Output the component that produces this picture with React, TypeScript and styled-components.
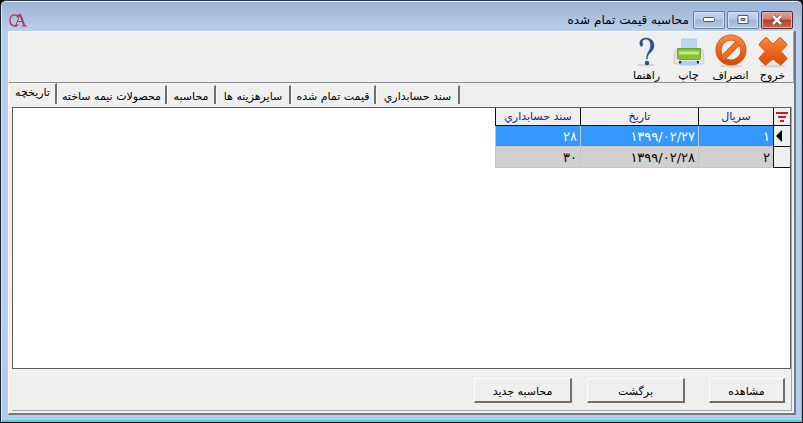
import React from "react";
import styled, { createGlobalStyle, css } from "styled-components";

const GlobalStyle = createGlobalStyle`
  * { box-sizing: border-box; }
  body { margin: 0; background: #000; font-family: "DejaVu Sans", sans-serif; font-size: 11px; color: #000; }
  button { font: inherit; color: inherit; }
`;

const WindowFrame = styled.main`
  display: flex;
  flex-direction: column;
  min-height: 100vh;
  padding: 0 6px 6px 6px;
  border: 1px solid #1a2430;
  border-top-color: #2b3a4d;
  border-bottom-color: #000;
  border-radius: 6px 6px 0 0;
  background: linear-gradient(#98b2d2, #b9d0ec 30px, #b9d0ec 120px, #b4cdea);
  box-shadow: inset 0 1px #eef4fb, inset 1px 0 #dbe9f8, inset -1px -2px #43d4ee;
`;

const TitleBar = styled.header`
  display: flex;
  align-items: center;
  height: 30px;
  padding: 0 0 0 2px;
`;

const Title = styled.h1`
  flex: 1;
  margin: 0;
  padding: 8px 4px 0 0;
  font-size: 12px;
  line-height: 16px;
  font-weight: 400;
  text-align: right;
`;

const Logo = styled.svg`
  width: 20px;
  height: 18px;
  margin-top: 8px;
`;

const CaptionGroup = styled.div`
  display: flex;
  gap: 2px;
  padding: 8px 3px 0 0;
`;

const CaptionButton = styled.button<{ $close?: boolean }>`
  display: grid;
  place-items: center;
  width: 32px;
  height: 18px;
  padding: 0;
  border: 1px solid ${(p) => (p.$close ? "#5b2a35" : "#64809f")};
  border-radius: 2px;
  background: ${(p) =>
    p.$close
      ? "linear-gradient(#e0a59c, #d0796c 45%, #b83a2b 50%, #cf6a50)"
      : "linear-gradient(#c3d6ed, #b3c9e4 45%, #9cb6d5 50%, #b2cae5)"};
  box-shadow: inset 0 0 0 1px ${(p) => (p.$close ? "#e5b0a8" : "#d3e1f2")};
`;

const Client = styled.div`
  display: flex;
  flex: 1;
  flex-direction: column;
  margin: 0 0 1px 1px;
  background: #efefef;
  border-left: 1px solid #fbfbfb;
  border-right: 2px solid #747b87;
  border-bottom: 2px solid #747b87;
`;

const Toolbar = styled.div`
  display: flex;
  gap: 1px;
  height: 52px;
  padding: 2px 0 0;
  border-top: 1px solid #fbfbfb;
  border-right: 1px solid #a0a0a0;
  border-bottom: 1px solid #8c8c8c;
`;

const ToolButton = styled.button`
  display: flex;
  flex-direction: column;
  align-items: center;
  width: 41px;
  padding: 0;
  border: 0;
  background: none;
  line-height: 16px;
  white-space: nowrap;

  svg { display: block; width: 32px; height: 34px; flex: none; }
`;

const TabList = styled.div`
  display: flex;
  align-items: flex-end;
  height: 24px;
  padding: 0 0 3px;
`;

const Tab = styled.button<{ $active?: boolean; $width: number }>`
  width: ${(p) => p.$width}px;
  height: 19px;
  padding: 3px 4px 0;
  border: solid;
  border-width: 1px 2px 0 1px;
  border-color: #fafafa #6f6f6f #fafafa #fafafa;
  background: #efefef;
  line-height: 14px;
  white-space: nowrap;
  ${(p) =>
    p.$active &&
    css`
      height: 21px;
      padding: 0 4px 2px;
    `}
`;

const Page = styled.section`
  display: flex;
  flex: 1;
  flex-direction: column;
  margin: 0 2px 2px 3px;
  border: solid;
  border-width: 0 1px 1px 0;
  border-color: #a5a5a8;
`;

const GridArea = styled.div`
  flex: 1;
  border: 1px solid #5f5a5a;
  background: #fff;
`;

const Table = styled.table`
  width: 295px;
  border-collapse: separate;
  border-spacing: 0;
  table-layout: fixed;
`;

const HeadCell = styled.th<{ $width: number }>`
  width: ${(p) => p.$width}px;
  height: 18px;
  padding: 0;
  border-left: 1px solid #111;
  border-bottom: 1px solid #111;
  background: #efefef;
  color: #1a1a94;
  font-weight: 400;
  line-height: 16px;
  white-space: nowrap;
  svg { display: block; margin: auto; }
`;

const Row = styled.tr<{ $selected?: boolean }>`
  background: ${(p) => (p.$selected ? "#3399ff" : "#d0d0d0")};
  color: ${(p) => (p.$selected ? "#fff" : "#000")};
`;

const Cell = styled.td`
  height: 21px;
  padding: 1px 3px 0 0;
  border-left: 1px solid #c6c6c6;
  border-bottom: 1px solid #c6c6c6;
  font-size: 13px;
  line-height: 18px;
  text-align: right;
`;

const Indicator = styled.td`
  height: 21px;
  padding: 0 0 0 2px;
  border-left: 1px solid #111;
  border-bottom: 1px solid #111;
  background: #efefef;
  svg { display: block; margin-right: auto; }
`;

const Actions = styled.footer`
  display: flex;
  gap: 15px;
  padding: 9px 6px 7px;
`;

const ActionButton = styled.button<{ $narrow?: boolean }>`
  width: ${(p) => (p.$narrow ? 76 : 98)}px;
  height: 25px;
  margin-left: ${(p) => (p.$narrow ? 9 : 0)}px;
  padding: 2px 0 0;
  border: solid;
  border-width: 1px 2px 2px 1px;
  border-color: #fff #746c6c #746c6c #fff;
  background: #efefef;
`;

const CrossIcon = () => (
  <svg viewBox="0 0 32 34" aria-hidden="true">
    <defs>
      <linearGradient id="orange" x1="0" y1="0" x2="0" y2="1">
        <stop offset="0" stopColor="#f48a3c" />
        <stop offset=".5" stopColor="#e9661c" />
        <stop offset="1" stopColor="#dc4d08" />
      </linearGradient>
    </defs>
    <ellipse cx="16" cy="32" rx="13" ry="1.5" fill="#d4d4d4" />
    <path d="M8 4Q9 3 10 4L16 10 22 4Q23 3 24 4L29.500 9.500Q30.500 10.500 29.500 11.500L24 17.500 29.500 23.500Q30.500 24.500 29.500 25.500L24.500 30.500Q23.500 31.500 22.500 30.500L16 25 9.500 30.500Q8.500 31.500 7.500 30.500L2.500 25.500Q1.500 24.500 2.500 23.500L8 17.500 2.500 11.500Q1.500 10.500 2.500 9.500Z" fill="url(#orange)" stroke="#d65a18" />
  </svg>
);

const CancelIcon = () => (
  <svg viewBox="0 0 32 34" aria-hidden="true">
    <ellipse cx="16" cy="32" rx="12" ry="1.5" fill="#d4d4d4" />
    <circle cx="16" cy="16" r="12.5" fill="none" stroke="#cf540e" strokeWidth="6" />
    <path d="M8 24 24 8" stroke="#cf540e" strokeWidth="6" />
    <circle cx="16" cy="16" r="12.5" fill="none" stroke="url(#orange)" strokeWidth="4.500" />
    <path d="M8 24 24 8" stroke="#ed741f" strokeWidth="4.500" />
  </svg>
);

const PrinterIcon = () => (
  <svg viewBox="0 0 32 34" aria-hidden="true">
    <path d="M8.500 5h15v11h-15z" fill="#b8d6f8" stroke="#9fc1e8" strokeWidth=".6" />
    <path d="M4 14.500Q2 16 1.500 20L1 28q0 2 2 2h26q2 0 2-2l-.5-8q-.5-4-2.500-5.500z" fill="#e3e7e6" stroke="#b5bcb8" strokeWidth=".7" />
    <path d="M4.500 14.500h23v9q0 2-2 2h-19q-2 0-2-2z" fill="#86c332" stroke="#5a9a1d" strokeWidth=".8" />
    <path d="M6 17.500h20v3H6z" fill="#c3ea72" />
    <path d="M6 27h20v2.500H6z" fill="#27384a" />
    <path d="M8.500 27h15l1 4.500h-17z" fill="#a9cdf6" />
  </svg>
);

const HelpIcon = () => (
  <svg viewBox="0 0 32 34" aria-hidden="true">
    <ellipse cx="15" cy="31" rx="9" ry="1.300" fill="#d2d2d2" />
    <path d="M9 11C8 6 11 4 15 4c5 0 8 3 8 7.500 0 4-2.500 6-4.500 8-1.500 1.500-2 3-2 5.500h-1c0-3 .5-5 2-7.500 1.500-2 2-3.500 2-6 0-4-1.500-6.300-4.500-6.300-2.500 0-4 1.300-3.700 3.300.3 1 .7 1.500.5 2.500-.3 1.700-2.400 1.800-2.800 0z" fill="#28508f" stroke="#28508f" strokeWidth=".4" />
    <circle cx="16" cy="29" r="2.200" fill="#28508f" />
  </svg>
);

const tools = [
  { label: "خروج", Icon: CrossIcon },
  { label: "انصراف", Icon: CancelIcon },
  { label: "چاپ", Icon: PrinterIcon },
  { label: "راهنما", Icon: HelpIcon },
];

const tabs = [
  { label: "تاریخچه", width: 48 },
  { label: "محصولات نیمه ساخته", width: 110 },
  { label: "محاسبه", width: 49 },
  { label: "سایرهزینه ها", width: 75 },
  { label: "قیمت تمام شده", width: 85 },
  { label: "سند حسابداري", width: 84 },
];

const rows = [
  { serial: "۱", date: "۱۳۹۹/۰۲/۲۷", doc: "۲۸" },
  { serial: "۲", date: "۱۳۹۹/۰۲/۲۸", doc: "۳۰" },
];

export default function App() {
  return (
    <>
      <GlobalStyle />
      <WindowFrame>
        <TitleBar>
          <Logo viewBox="0 0 20 18" aria-hidden="true">
            <path d="M9 6C6 2 1 4 1 9.500s5 7 8 4M9 3v3" fill="none" stroke="#b83358" strokeWidth="1.300" />
            <path d="M6.500 15 11 3.500M8 10.500h6M5 15h3.500M12.500 15H18" fill="none" stroke="#b83358" />
            <path d="m11 3 4.500 12" stroke="#b83358" strokeWidth="2" />
          </Logo>
          <Title dir="rtl">محاسبه قیمت تمام شده</Title>
          <CaptionGroup>
            <CaptionButton aria-label="Minimize">
              <svg width="12" height="6"><rect x=".5" y=".5" width="11" height="4" rx="1" fill="#fff" stroke="#4a5b70" /></svg>
            </CaptionButton>
            <CaptionButton aria-label="Maximize">
              <svg width="12" height="10"><path d="M1 .5h10v8H1zM4 3.500v2h4v-2z" fillRule="evenodd" fill="#fff" stroke="#4a5b70" /></svg>
            </CaptionButton>
            <CaptionButton $close aria-label="Close">
              <svg width="12" height="10"><path d="m2 1 8 8m0-8-8 8" stroke="#60313a" strokeWidth="4" /><path d="m2 1 8 8m0-8-8 8" stroke="#fff" strokeWidth="2.500" /></svg>
            </CaptionButton>
          </CaptionGroup>
        </TitleBar>
        <Client>
          <Toolbar dir="rtl">
            {tools.map(({ label, Icon }) => (
              <ToolButton key={label}><Icon />{label}</ToolButton>
            ))}
          </Toolbar>
          <TabList role="tablist">
            {tabs.map((t, i) => (
              <Tab key={t.label} role="tab" aria-selected={i === 0} $active={i === 0} $width={t.width} dir="rtl">{t.label}</Tab>
            ))}
          </TabList>
          <Page dir="rtl">
            <GridArea>
              <Table>
                <thead>
                  <tr>
                    <HeadCell $width={17}>
                      <svg width="14" height="12" aria-label="فیلتر"><path d="M1 2h12M3 6h8M5 10h4" stroke="#d8141c" strokeWidth="2" /></svg>
                    </HeadCell>
                    <HeadCell $width={75}>سریال</HeadCell>
                    <HeadCell $width={118}>تاریخ</HeadCell>
                    <HeadCell $width={85}>سند حسابداري</HeadCell>
                  </tr>
                </thead>
                <tbody>
                  {rows.map((r, i) => (
                    <Row key={r.serial} $selected={i === 0}>
                      <Indicator>{i === 0 && <svg width="6" height="12"><path d="M6 0v12L0 6z" /></svg>}</Indicator>
                      <Cell>{r.serial}</Cell>
                      <Cell>{r.date}</Cell>
                      <Cell>{r.doc}</Cell>
                    </Row>
                  ))}
                </tbody>
              </Table>
            </GridArea>
            <Actions>
              <ActionButton $narrow>مشاهده</ActionButton>
              <ActionButton>برگشت</ActionButton>
              <ActionButton>محاسبه جدید</ActionButton>
            </Actions>
          </Page>
        </Client>
      </WindowFrame>
    </>
  );
}
